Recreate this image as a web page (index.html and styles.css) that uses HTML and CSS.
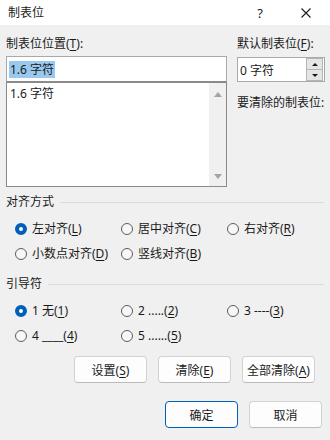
FILE: index.html
```html
<!DOCTYPE html>
<html lang="zh-CN">
<head>
    <meta charset="UTF-8">
    <meta name="viewport" content="width=device-width, initial-scale=1.0">
    <title>制表位</title>
    <link rel="stylesheet" href="styles.css">
</head>
<body>
<div class="dialog">
    <div class="titlebar">
        <span class="title">制表位</span>
        <span class="tb-btn help">?</span>
        <span class="tb-btn close">
            <svg width="10" height="10" viewBox="0 0 10 10"><path d="M0.5 0.5 L9.5 9.5 M9.5 0.5 L0.5 9.5" stroke="#1a1a1a" stroke-width="1.1" fill="none"/></svg>
        </span>
    </div>

    <div class="content">
        <div class="top">
            <div class="left-col">
                <div class="label">制表位位置(<u>T</u>):</div>
                <div class="textbox"><span class="sel">1.6 字符</span></div>
                <div class="listbox">
                    <div class="list-items">
                        <div class="item">1.6 字符</div>
                    </div>
                    <div class="vscroll">
                        <span class="arrow up"></span>
                        <span class="arrow down"></span>
                    </div>
                </div>
            </div>
            <div class="right-col">
                <div class="label">默认制表位(<u>F</u>):</div>
                <div class="spin">
                    <span class="spin-val">0 字符</span>
                    <div class="spin-btns">
                        <span class="spin-btn"><i class="tri up"></i></span>
                        <span class="spin-btn"><i class="tri down"></i></span>
                    </div>
                </div>
                <div class="label clear-label">要清除的制表位:</div>
            </div>
        </div>

        <div class="group-head first"><span>对齐方式</span><span class="rule"></span></div>
        <div class="radio-grid">
            <label class="radio checked"><i></i><span>左对齐(<u>L</u>)</span></label>
            <label class="radio"><i></i><span>居中对齐(<u>C</u>)</span></label>
            <label class="radio"><i></i><span>右对齐(<u>R</u>)</span></label>
            <label class="radio"><i></i><span>小数点对齐(<u>D</u>)</span></label>
            <label class="radio"><i></i><span>竖线对齐(<u>B</u>)</span></label>
        </div>

        <div class="group-head"><span>引导符</span><span class="rule"></span></div>
        <div class="radio-grid">
            <label class="radio checked"><i></i><span>1 无(<u>1</u>)</span></label>
            <label class="radio"><i></i><span>2 .....(<u>2</u>)</span></label>
            <label class="radio"><i></i><span>3 ----(<u>3</u>)</span></label>
            <label class="radio"><i></i><span>4 ____(<u>4</u>)</span></label>
            <label class="radio"><i></i><span>5 ......(<u>5</u>)</span></label>
        </div>

        <div class="btn-row">
            <button>设置(<u>S</u>)</button>
            <button>清除(<u>E</u>)</button>
            <button>全部清除(<u>A</u>)</button>
        </div>
        <div class="btn-row bottom">
            <button class="default">确定</button>
            <button>取消</button>
        </div>
    </div>
</div>
</body>
</html>
```

FILE: styles.css
```css
body{
    margin: 0;
    padding: 0;
    background: #f0f0f0;
    font-family: "Noto Sans", "Noto Sans CJK SC", sans-serif;
    font-size: 12px;
    color: #1a1a1a;
}
u{ text-decoration: underline; text-underline-offset: 2px; }

.dialog{
    width: 330px;
    height: 440px;
    background: #f0f0f0;
    overflow: hidden;
}

.titlebar{
    height: 25px;
    background: #fff;
    display: flex;
    align-items: center;
}
.title{
    flex: 1;
    padding-left: 8px;
    line-height: 16px;
}
.tb-btn{
    width: 44px;
    height: 25px;
    display: flex;
    align-items: center;
    justify-content: center;
}
.help{ font-size: 13px; }
.close{ width: 48px; }

.content{
    padding: 11px 6px 0 6px;
}
.label{
    line-height: 16px;
    height: 16px;
}

.top{
    display: grid;
    grid-template-columns: 221px 88px;
    column-gap: 10px;
}
.left-col .label{ margin-bottom: 4px; }

.textbox{
    height: 24px;
    border: 1px solid #a9a9a9;
    border-bottom-color: #8a8a8a;
    background: #fff;
    display: flex;
    align-items: center;
    padding-left: 2px;
}
.sel{
    background: #99c9ef;
    line-height: 17px;
    padding: 0 1px;
}

.listbox{
    height: 103px;
    border: 1px solid #8a8a8a;
    background: #fff;
    display: flex;
}
.list-items{
    flex: 1;
    padding: 2px 3px;
}
.item{ line-height: 17px; }
.vscroll{
    width: 17px;
    background: #f0f0f0;
    display: flex;
    flex-direction: column;
    justify-content: space-between;
    align-items: center;
    padding: 9px 0 7px;
}
.arrow{
    width: 0;
    height: 0;
    border-left: 4px solid transparent;
    border-right: 4px solid transparent;
}
.arrow.up{ border-bottom: 5px solid #a3a3a3; }
.arrow.down{ border-top: 5px solid #a3a3a3; }

.right-col .label{ margin-bottom: 5px; }
.spin{
    height: 23px;
    border: 1px solid #a9a9a9;
    background: #fff;
    display: flex;
    align-items: center;
    padding-left: 2px;
}
.spin-val{ flex: 1; }
.spin-btns{
    display: flex;
    flex-direction: column;
    width: 15px;
    height: 21px;
    margin-right: 1px;
    border: 1px solid #b5b5b5;
    background: #b5b5b5;
    gap: 1px;
}
.spin-btn{
    flex: 1;
    background: #e5e5e5;
    display: flex;
    align-items: center;
    justify-content: center;
}
.tri{
    width: 0;
    height: 0;
    border-left: 3px solid transparent;
    border-right: 3px solid transparent;
}
.tri.up{ border-bottom: 3px solid #1a1a1a; }
.tri.down{ border-top: 3px solid #1a1a1a; }
.right-col .clear-label{ margin-top: 13px; }

.group-head{
    display: flex;
    align-items: center;
    gap: 6px;
    line-height: 16px;
    margin-top: 10px;
}
.group-head.first{ margin-top: 7px; }
.rule{
    flex: 1;
    height: 1px;
    background: #dadada;
}

.radio-grid{
    display: grid;
    grid-template-columns: 106px 106px 106px;
    grid-auto-rows: 25px;
    padding-left: 9px;
    margin-top: 6px;
}
.radio{
    display: flex;
    align-items: center;
    gap: 5px;
    line-height: 16px;
    white-space: nowrap;
}
.radio i{
    box-sizing: border-box;
    width: 12px;
    height: 12px;
    border-radius: 50%;
    border: 1px solid #5c5c5c;
    background: #f7f7f7;
}
.radio.checked i{
    border: 4px solid #005fb8;
    background: #fff;
}

.btn-row{
    display: flex;
    gap: 11px;
    margin-top: 8px;
    padding-left: 68px;
}
.btn-row.bottom{
    margin-top: 18px;
    padding-left: 159px;
}
button{
    width: 73px;
    height: 27px;
    box-sizing: border-box;
    border: 1px solid #d2d2d2;
    border-bottom-color: #bcbcbc;
    border-radius: 4px;
    background: #fdfdfd;
    font-family: inherit;
    font-size: 12px;
    color: #1a1a1a;
    padding: 0;
}
button.default{
    border: 1px solid #005fb8;
}
```
